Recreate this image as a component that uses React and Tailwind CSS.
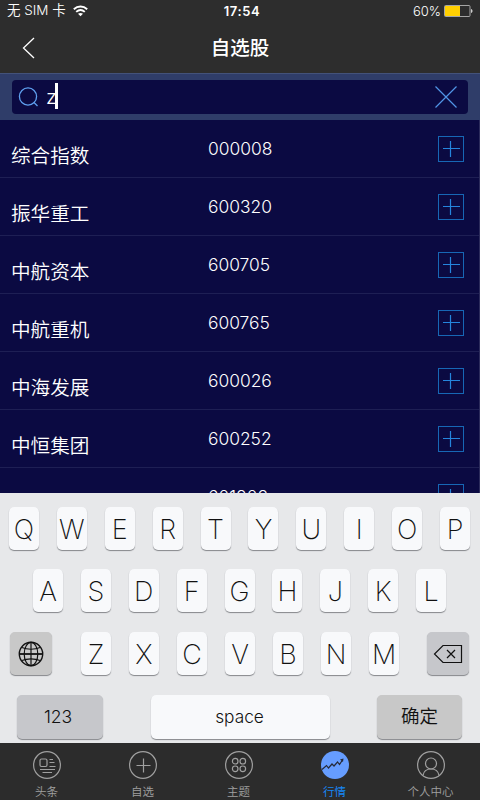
import clsx from 'clsx'

const stocks = [
  { name: '综合指数', code: '000008' },
  { name: '振华重工', code: '600320' },
  { name: '中航资本', code: '600705' },
  { name: '中航重机', code: '600765' },
  { name: '中海发展', code: '600026' },
  { name: '中恒集团', code: '600252' },
  { name: '', code: '601808' },
]

const tabs = [
  { label: '头条', icon: NewsIcon },
  { label: '自选', icon: AddIcon },
  { label: '主题', icon: TopicIcon },
  { label: '行情', icon: MarketIcon, active: true },
  { label: '个人中心', icon: UserIcon },
]

function NewsIcon() {
  return (
    <svg width="30" height="30" viewBox="0 0 30 30" fill="none" stroke="currentColor" strokeWidth="1.2">
      <circle cx="15" cy="15" r="13.4" />
      <rect x="8" y="9" width="7" height="7.5" rx="1.5" />
      <path d="M17.5 9.5H21M17.5 12.5h5M17.5 16.5h6M8 19.5h15M10.5 22.5H20" />
    </svg>
  )
}

function AddIcon() {
  return (
    <svg width="30" height="30" viewBox="0 0 30 30" fill="none" stroke="currentColor" strokeWidth="1.2">
      <circle cx="15" cy="15" r="13.4" />
      <path d="M15.5 8.5v14M8.5 15.500h14" />
    </svg>
  )
}

function TopicIcon() {
  return (
    <svg width="30" height="30" viewBox="0 0 30 30" fill="none" stroke="currentColor" strokeWidth="1.2">
      <circle cx="15" cy="15" r="13.4" />
      <circle cx="11.2" cy="11.2" r="2.8" />
      <circle cx="18.8" cy="11.2" r="2.8" />
      <circle cx="11.2" cy="18.8" r="2.8" />
      <circle cx="18.8" cy="18.8" r="2.8" />
    </svg>
  )
}

function MarketIcon() {
  return (
    <svg width="30" height="30" viewBox="0 0 30 30" fill="none">
      <circle cx="15" cy="15" r="14" fill="#669dff" />
      <path d="M2 19.5l4.5-4 2 2.500 3.500-4 2 2 3.500-4 2 2.500 3-4.500" stroke="#262a38" strokeWidth="1.2" />
      <path d="M20 9.5l3.500-1-.5 3.500z" fill="#262a38" />
    </svg>
  )
}

function UserIcon() {
  return (
    <svg width="30" height="30" viewBox="0 0 30 30" fill="none" stroke="currentColor" strokeWidth="1.2">
      <circle cx="15" cy="15" r="13.4" />
      <circle cx="15" cy="13.5" r="5.5" />
      <path d="M7 25.5c.7-4.500 3.500-6.500 8-6.500s7.300 2 8 6.500" />
    </svg>
  )
}

function GlobeIcon() {
  return (
    <svg width="26" height="26" viewBox="0 0 26 26" fill="none" stroke="#111" strokeWidth="1.2">
      <circle cx="13" cy="13" r="11.7" strokeWidth="1.4" />
      <ellipse cx="13" cy="13" rx="6.8" ry="11.7" />
      <path d="M13 1v24" />
      <path d="M1 13h24" strokeWidth="1.8" />
      <path d="M4 6.500c5 2.300 13 2.300 18 0M4 19.500c5-2.300 13-2.300 18 0" />
    </svg>
  )
}

function BackspaceIcon() {
  return (
    <svg width="30" height="20" viewBox="0 0 30 20" fill="none" stroke="#111" strokeWidth="1.2">
      <path d="M10 1.500h18.500v17H10L1.500 10z" />
      <path d="M14 6l8 8M22 6l-8 8" />
    </svg>
  )
}

function StatusBar() {
  return (
    <div className="grid h-[22px] grid-cols-3 items-center text-[13px] leading-none">
      <div className="flex items-center pl-[7px]">
        <span className="whitespace-pre text-[13.5px] font-[350]">无 SIM 卡</span>
        <svg className="ml-[7px]" width="15" height="12" viewBox="0 0 15 12" fill="none" stroke="white" strokeWidth="1.9">
          <path d="M.8 4.200c4-3.600 9.400-3.600 13.400 0M3.200 6.900c2.600-2.300 6-2.300 8.600 0" />
          <path d="M5 8.700c1.600-1.100 3.400-1.100 5 0L7.500 11.200z" fill="white" stroke="none" />
        </svg>
      </div>
      <div className="pl-1 text-center font-semibold tracking-[0.6px]">17:54</div>
      <div className="flex items-center justify-end pr-[7px]">
        <span className="text-[13px] font-[350]">60%</span>
        <svg className="ml-[3px]" width="29" height="12" viewBox="0 0 29 12">
          <rect x=".5" y=".5" width="25.5" height="11" rx="1" fill="none" stroke="#a5a5a5" />
          <rect x="1" y="1" width="15" height="10" fill="#ffcf00" />
          <path d="M27 4c2 .5 2 3.500 0 4z" fill="#ccc" />
        </svg>
      </div>
    </div>
  )
}

function Header() {
  return (
    <div className="grid h-[51px] grid-cols-3 items-center">
      <svg className="ml-[22px]" width="13" height="22" viewBox="0 0 13 22" fill="none" stroke="white" strokeWidth="1.3">
        <path d="M12 1L1.500 11 12 21" />
      </svg>
      <h1 className="pt-[3px] text-center text-[19.5px] leading-none font-medium">自选股</h1>
    </div>
  )
}

function SearchBar() {
  return (
    <div className="h-[47px] border-t border-[#43527a] bg-[#2f3d69] px-3 pt-[6px]">
      <div className="flex h-[34px] items-center rounded-sm bg-[#0b0a42] pr-[10px] pl-[6px]">
        <svg width="21" height="21" viewBox="0 0 21 21" fill="none" stroke="#5fa0ef" strokeWidth="1.3">
          <circle cx="10" cy="9.5" r="8.6" />
          <path d="M16 15.500l3.500 3.500" />
        </svg>
        <span className="ml-[7px] text-[20px] leading-none font-light">z</span>
        <span className="-ml-[2px] h-[26px] w-[3px] -translate-y-px bg-white" />
        <svg className="ml-auto" width="24" height="24" viewBox="0 0 24 24" fill="none" stroke="#5095e6" strokeWidth="1.2">
          <path d="M1.500 1.500l21 21M22.500 1.500l-21 21" />
        </svg>
      </div>
    </div>
  )
}

function StockRow({ name, code }) {
  return (
    <div className="grid h-[58px] shrink-0 grid-cols-[208px_1fr_auto] border-b border-[#1e1f54] pr-[14px]">
      <span className="pt-[26px] pl-[11px] text-[19.6px] leading-5 font-[350]">{name}</span>
      <span className="pt-[19px] text-[17.4px] leading-5 font-[350]">{code}</span>
      <svg className="mt-4" width="27" height="27" viewBox="0 0 27 27" fill="none" stroke="#1767b5">
        <rect x=".5" y=".5" width="25" height="25" />
        <path d="M12.5 5v16M5 12.500h17" stroke="#2585dd" strokeWidth="1.2" />
      </svg>
    </div>
  )
}

function Key({ children, className }) {
  return (
    <button className={clsx('flex shrink-0 items-center justify-center rounded-[5px] text-[#111] shadow-[0_1px_1px_#85878b]', className)}>
      {children}
    </button>
  )
}

function Letters({ letters, className }) {
  return (
    <div className={clsx('flex', className)}>
      {letters.split('').map((letter) => (
        <Key key={letter} className="h-[43px] w-[30px] bg-[#f8f9fb] pt-[3px] text-[27px] font-[250]">
          {letter}
        </Key>
      ))}
    </div>
  )
}

function Keyboard() {
  return (
    <div className="flex h-[250px] flex-col bg-[#e7e8ea] pt-[14px]">
      <Letters letters="QWERTYUIOP" className="gap-[17.9px] pl-[9px]" />
      <Letters letters="ASDFGHJKL" className="mt-[19px] gap-[17.9px] pl-[33px]" />
      <div className="mt-5 flex pl-[10px]">
        <Key className="h-[43px] w-[42px] bg-[#c8c8c8]"><GlobeIcon /></Key>
        <Letters letters="ZXCVBNM" className="ml-[29px] gap-[18px]" />
        <Key className="ml-7 h-[43px] w-[42px] bg-[#c6c7cb]"><BackspaceIcon /></Key>
      </div>
      <div className="mt-5 flex pl-[17px]">
        <Key className="h-11 w-[86px] bg-[#c6c7cb] pr-1 text-[17.5px] font-light">123</Key>
        <Key className="ml-12 h-11 w-[179px] bg-[#f8f9fb] pr-0.5 text-[17.3px] font-light">space</Key>
        <Key className="ml-[47px] h-11 w-[85px] bg-[#c8c8c8] text-[18.5px] font-[350]">确定</Key>
      </div>
    </div>
  )
}

function TabBar() {
  return (
    <div className="grid h-[57px] grid-cols-5 bg-[#2c2c2c] text-[#a0a0a0]">
      {tabs.map(({ label, icon: Icon, active }) => (
        <div key={label} className={clsx('flex flex-col items-center pt-[7px]', active ? 'pr-[3px] text-[#1687f5]' : 'pr-[3px]')}>
          <Icon />
          <span className={clsx('mt-[6px] text-[11.5px] leading-3', active ? 'font-normal' : 'font-[350]')}>{label}</span>
        </div>
      ))}
    </div>
  )
}

export default function App() {
  return (
    <div className="flex h-[800px] w-[480px] flex-col overflow-hidden bg-[#0b0a42] font-['Inter','Noto_Sans_CJK_SC',sans-serif] text-white">
      <div className="bg-[#2d2d2d]">
        <StatusBar />
        <Header />
      </div>
      <SearchBar />
      <div className="flex h-[373px] flex-col overflow-hidden border-r border-[#2c2c5c]">
        {stocks.map((stock) => (
          <StockRow key={stock.code} name={stock.name} code={stock.code} />
        ))}
      </div>
      <Keyboard />
      <TabBar />
    </div>
  )
}
